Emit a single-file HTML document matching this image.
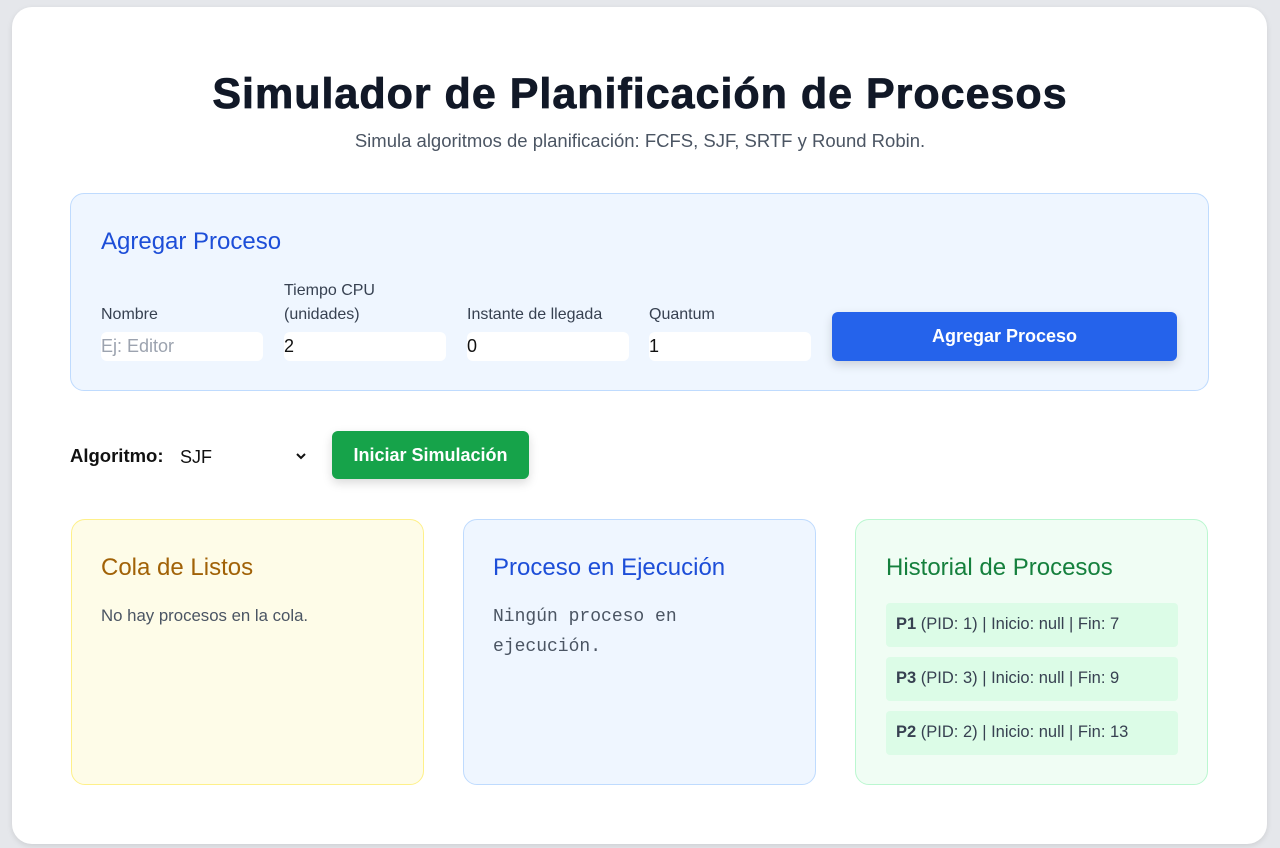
<!DOCTYPE html>
<html><head><meta charset="utf-8"><style>
*{box-sizing:border-box;margin:0;padding:0}
body{width:1280px;height:848px;background:#e5e7eb;font-family:"Liberation Sans",sans-serif;position:relative;overflow:hidden}
.card{position:absolute;left:12px;top:7px;width:1255px;height:837px;background:#fff;border-radius:20px;box-shadow:0 2px 6px rgba(0,0,0,.1)}
.a{position:absolute}
h1{position:absolute;left:0;width:1280px;top:70px;text-align:center;font-size:43px;font-weight:900;color:#111827;letter-spacing:1px;-webkit-text-stroke:.8px #111827}
.sub{left:0;width:1280px;top:130px;text-align:center;font-size:18.5px;color:#4b5563}
.box{border-radius:14px;border:1px solid}
.lbl{font-size:16px;color:#374151;line-height:24px}
.inp{background:#fff;border-radius:6px;height:29px;width:162px;font-size:18px;padding:4px 0 0 0;color:#111}
h2{position:absolute;font-size:24px;font-weight:normal}
.hi{position:absolute;left:886px;width:292px;height:44px;background:#dcfce7;border-radius:4px;font-size:16.5px;color:#374151;padding:12px 0 0 10px}
</style></head><body>
<div class="card"></div>
<h1>Simulador de Planificación de Procesos</h1>
<div class="a sub">Simula algoritmos de planificación: FCFS, SJF, SRTF y Round Robin.</div>

<div class="a box" style="left:70px;top:193px;width:1139px;height:198px;background:#eff6ff;border-color:#bfdbfe"></div>
<h2 style="left:101px;top:228px;color:#1d4ed8">Agregar Proceso</h2>
<div class="a lbl" style="left:101px;top:303px">Nombre</div>
<div class="a lbl" style="left:284px;top:279px">Tiempo CPU<br>(unidades)</div>
<div class="a lbl" style="left:467px;top:303px">Instante de llegada</div>
<div class="a lbl" style="left:649px;top:303px">Quantum</div>
<div class="a inp" style="left:101px;top:332px;color:#9ca3af">Ej: Editor</div>
<div class="a inp" style="left:284px;top:332px">2</div>
<div class="a inp" style="left:467px;top:332px">0</div>
<div class="a inp" style="left:649px;top:332px">1</div>
<div class="a" style="left:832px;top:312px;width:345px;height:49px;background:#2563eb;border-radius:6px;color:#fff;font-size:18px;font-weight:bold;text-align:center;line-height:49px;box-shadow:0 4px 10px rgba(0,0,0,.15)">Agregar Proceso</div>

<div class="a" style="left:70px;top:445px;font-size:18.5px;font-weight:bold;color:#111">Algoritmo:</div>
<div class="a" style="left:174px;top:443px;width:138px;height:28px;background:#fff;border-radius:4px;font-size:18px;padding:4px 0 0 6px;color:#111">SJF<svg style="position:absolute;right:6px;top:10px" width="10" height="7" viewBox="0 0 10 7"><path d="M1 1l4 4 4-4" fill="none" stroke="#111" stroke-width="2"/></svg></div>
<div class="a" style="left:332px;top:431px;width:197px;height:48px;background:#16a34a;border-radius:6px;color:#fff;font-size:18px;font-weight:bold;text-align:center;line-height:48px;box-shadow:0 4px 10px rgba(0,0,0,.15)">Iniciar Simulación</div>

<div class="a box" style="left:71px;top:519px;width:353px;height:266px;background:#fefce8;border-color:#fef08a"></div>
<h2 style="left:101px;top:554px;color:#a16207">Cola de Listos</h2>
<div class="a" style="left:101px;top:606px;font-size:16.8px;color:#4b5563">No hay procesos en la cola.</div>

<div class="a box" style="left:463px;top:519px;width:353px;height:266px;background:#eff6ff;border-color:#bfdbfe"></div>
<h2 style="left:493px;top:554px;color:#1d4ed8">Proceso en Ejecución</h2>
<div class="a" style="left:493px;top:602px;font-family:'Liberation Mono',monospace;font-size:18px;line-height:30px;color:#4b5563">Ningún proceso en<br>ejecución.</div>

<div class="a box" style="left:855px;top:519px;width:353px;height:266px;background:#f0fdf4;border-color:#bbf7d0"></div>
<h2 style="left:886px;top:554px;color:#15803d">Historial de Procesos</h2>
<div class="hi" style="top:603px"><b>P1</b> (PID: 1) | Inicio: null | Fin: 7</div>
<div class="hi" style="top:657px"><b>P3</b> (PID: 3) | Inicio: null | Fin: 9</div>
<div class="hi" style="top:711px"><b>P2</b> (PID: 2) | Inicio: null | Fin: 13</div>
</body></html>
